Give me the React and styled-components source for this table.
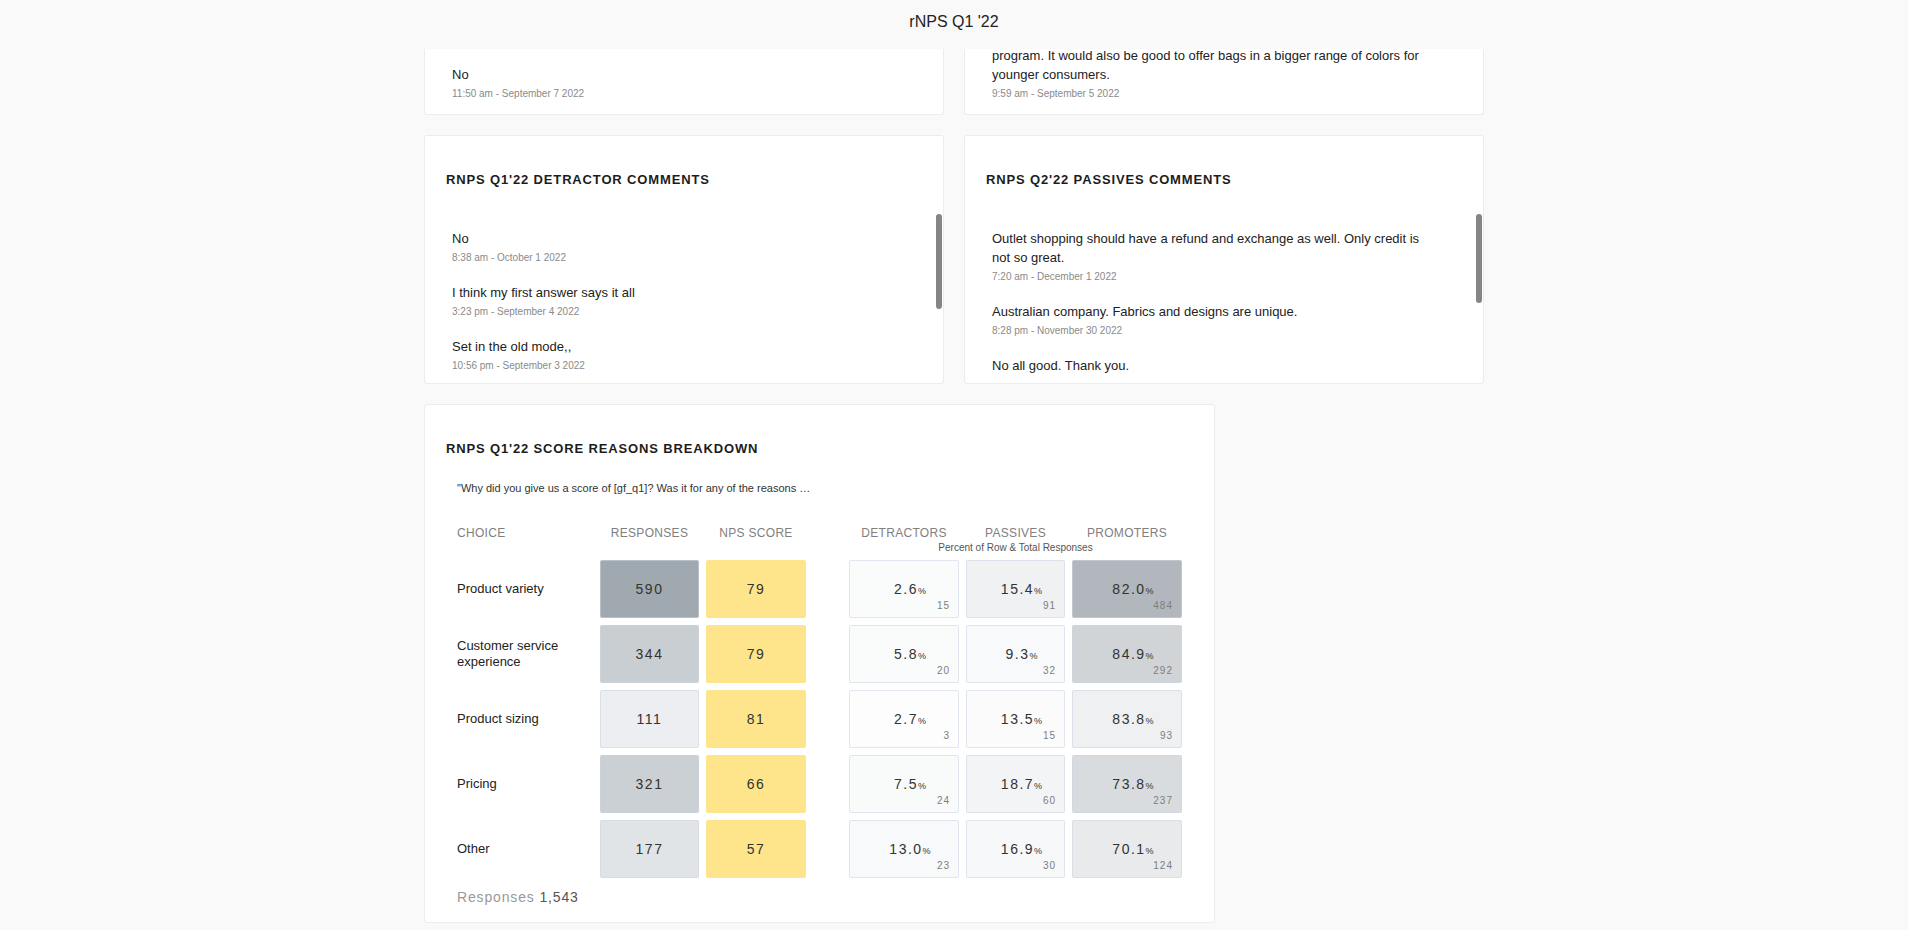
import React from "react";
import styled, { createGlobalStyle } from "styled-components";

const GlobalStyle = createGlobalStyle`
  html, body { margin: 0; padding: 0; }
  body {
    background: #f9f9f9;
    font-family: "Liberation Sans", Arial, Helvetica, sans-serif;
    color: #222;
  }
  * { box-sizing: border-box; }
`;

const Page = styled.div`
  height: 100vh;
  display: flex;
  flex-direction: column;
  overflow: hidden;
`;

const Header = styled.header`
  flex: none;
  height: 49px;
  padding-top: 13px;
  text-align: center;
  font-size: 16px;
  line-height: 18px;
  color: #222;
`;

const Viewport = styled.main`
  flex: 1;
  min-height: 0;
  overflow: hidden;
`;

const Stack = styled.div`
  width: 1060px;
  margin: 0 auto;
  display: flex;
  flex-direction: column;
  align-items: flex-start;
  gap: 20px;
`;

const Row = styled.div`
  align-self: stretch;
  display: grid;
  grid-template-columns: 1fr 1fr;
  gap: 20px;
`;

const Card = styled.section`
  background: #fff;
  border: 1px solid #ececec;
  border-radius: 3px;
`;

const TopCard = styled(Card)`
  border-top: none;
  border-radius: 0 0 3px 3px;
  padding: ${(p) => p.$padTop}px 44px 13px 27px;
`;

const ShiftedList = styled.div`
  margin-top: ${(p) => p.$shift}px;
`;

const CommentCard = styled(Card)`
  height: 249px;
  display: flex;
  flex-direction: column;
  padding: 36px 0 5px;
  overflow: hidden;
`;

const CardTitle = styled.h2`
  margin: 0;
  padding: 0 21px;
  font-size: 13px;
  line-height: 16px;
  font-weight: 700;
  letter-spacing: 0.85px;
  text-transform: uppercase;
  color: #1d1d1d;
`;

const CommentList = styled.div`
  position: relative;
  flex: 1;
  min-height: 0;
  overflow: hidden;
  margin-top: 24px;
  padding: 17px 44px 0 27px;
`;

const Comment = styled.div`
  margin-bottom: 18px;
`;

const CommentText = styled.div`
  font-size: 13px;
  line-height: 19px;
  color: #222;
`;

const CommentDate = styled.div`
  margin-top: 2px;
  font-size: 10px;
  line-height: 15px;
  color: #8a8a8a;
`;

const Thumb = styled.div`
  position: absolute;
  top: 2px;
  right: 1px;
  width: 6px;
  height: ${(p) => p.$h}px;
  border-radius: 3px;
  background: #858585;
`;

const ScoreCard = styled(Card)`
  width: 791px;
  padding: 36px 0 17px;
`;

const Quote = styled.p`
  margin: 24px 0 0;
  padding-left: 32px;
  font-size: 11px;
  line-height: 15px;
  color: #333;
`;

const Table = styled.div`
  margin-top: 30px;
  padding-left: 32px;
`;

const columns = `136px 99px 100px 146px 99px 110px`;

const HeadGrid = styled.div`
  display: grid;
  grid-template-columns: ${columns};
  column-gap: 7px;
  row-gap: 2px;
  margin-bottom: 6px;
`;

const Heading = styled.div`
  grid-row: 1;
  margin-left: ${(p) => (p.$lead ? 36 : 0)}px;
  font-size: 12px;
  line-height: 14px;
  letter-spacing: 0.3px;
  color: #808080;
  text-align: ${(p) => (p.$left ? "left" : "center")};
  white-space: nowrap;
`;

const SubHeading = styled.div`
  grid-row: 2;
  grid-column: 4 / span 3;
  margin-left: 36px;
  font-size: 10px;
  line-height: 12px;
  color: #555;
  text-align: center;
`;

const BodyGrid = styled.div`
  display: grid;
  grid-template-columns: ${columns};
  grid-auto-rows: 58px;
  column-gap: 7px;
  row-gap: 7px;
`;

const Label = styled.div`
  display: flex;
  align-items: center;
  font-size: 13px;
  line-height: 16px;
  color: #222;
`;

const Cell = styled.div`
  position: relative;
  margin-left: ${(p) => (p.$lead ? 36 : 0)}px;
  display: flex;
  align-items: center;
  justify-content: center;
  background: ${(p) => p.$bg};
  border: 1px solid ${(p) => p.$border || "rgba(203, 214, 228, 0.55)"};
  border-radius: 2px;
`;

const Number = styled.span`
  font-size: 14px;
  letter-spacing: 1.5px;
  color: #333;
`;

const Percent = styled.span`
  margin-left: 12px;
  font-size: 14px;
  letter-spacing: 1.5px;
  color: #333;
  white-space: nowrap;
`;

const PercentSign = styled.span`
  font-size: 9px;
  letter-spacing: 0;
`;

const Count = styled.span`
  position: absolute;
  right: 8px;
  bottom: 5px;
  font-size: 10px;
  line-height: 12px;
  letter-spacing: 1px;
  color: #7e7e7e;
`;

const Footer = styled.div`
  margin-top: 11px;
  padding-left: 32px;
  font-size: 14px;
  line-height: 16px;
  letter-spacing: 0.85px;
  color: #999;
`;

const FooterValue = styled.span`
  color: #555;
`;

const detractors = [
  { text: "No", date: "8:38 am - October 1 2022" },
  { text: "I think my first answer says it all", date: "3:23 pm - September 4 2022" },
  { text: "Set in the old mode,,", date: "10:56 pm - September 3 2022" },
];

const passives = [
  {
    text: "Outlet shopping should have a refund and exchange as well. Only credit is not so great.",
    date: "7:20 am - December 1 2022",
  },
  { text: "Australian company. Fabrics and designs are unique.", date: "8:28 pm - November 30 2022" },
  { text: "No all good. Thank you." },
];

const rows = [
  {
    label: "Product variety", resp: 590, respBg: "#9fa9af", nps: 79,
    det: ["2.6", 15, "#fafbfb"], pas: ["15.4", 91, "#eff1f3"], pro: ["82.0", 484, "#b1b7bc"],
  },
  {
    label: "Customer service experience", resp: 344, respBg: "#c9ced3", nps: 79,
    det: ["5.8", 20, "#fafbfb"], pas: ["9.3", 32, "#f8f9fa"], pro: ["84.9", 292, "#d0d4d7"],
  },
  {
    label: "Product sizing", resp: 111, respBg: "#eceef1", nps: 81,
    det: ["2.7", 3, "#fdfdfd"], pas: ["13.5", 15, "#fbfbfc"], pro: ["83.8", 93, "#eef0f2"],
  },
  {
    label: "Pricing", resp: 321, respBg: "#cbd0d5", nps: 66,
    det: ["7.5", 24, "#f9fafa"], pas: ["18.7", 60, "#f3f4f6"], pro: ["73.8", 237, "#d9dcdf"],
  },
  {
    label: "Other", resp: 177, respBg: "#e1e4e7", nps: 57,
    det: ["13.0", 23, "#f8f9fa"], pas: ["16.9", 30, "#f7f8f9"], pro: ["70.1", 124, "#e8eaec"],
  },
];

function CommentBlock({ item }) {
  return (
    <Comment>
      <CommentText>{item.text}</CommentText>
      {item.date && <CommentDate>{item.date}</CommentDate>}
    </Comment>
  );
}

function CommentsCard({ title, items, thumb }) {
  return (
    <CommentCard>
      <CardTitle>{title}</CardTitle>
      <CommentList>
        {items.map((c, i) => (
          <CommentBlock key={i} item={c} />
        ))}
        <Thumb $h={thumb} />
      </CommentList>
    </CommentCard>
  );
}

function PercentCell({ data, lead }) {
  const [pct, count, bg] = data;
  return (
    <Cell $bg={bg} $lead={lead}>
      <Percent>
        {pct}
        <PercentSign>%</PercentSign>
      </Percent>
      <Count>{count}</Count>
    </Cell>
  );
}

export default function App() {
  return (
    <>
      <GlobalStyle />
      <Page>
        <Header>rNPS Q1 '22</Header>
        <Viewport>
          <Stack>
            <Row>
              <TopCard $padTop={16}>
                <CommentText>No</CommentText>
                <CommentDate>11:50 am - September 7 2022</CommentDate>
              </TopCard>
              <TopCard $padTop={0}>
                <ShiftedList $shift={-3}>
                  <CommentText>
                    program. It would also be good to offer bags in a bigger range of colors for younger consumers.
                  </CommentText>
                  <CommentDate>9:59 am - September 5 2022</CommentDate>
                </ShiftedList>
              </TopCard>
            </Row>
            <Row>
              <CommentsCard title="rNPS Q1'22 Detractor Comments" items={detractors} thumb={95} />
              <CommentsCard title="rNPS Q2'22 Passives Comments" items={passives} thumb={89} />
            </Row>
            <ScoreCard>
              <CardTitle>rNPS Q1'22 Score Reasons Breakdown</CardTitle>
              <Quote>"Why did you give us a score of [gf_q1]? Was it for any of the reasons …</Quote>
              <Table>
                <HeadGrid>
                  <Heading $left>CHOICE</Heading>
                  <Heading>RESPONSES</Heading>
                  <Heading>NPS SCORE</Heading>
                  <Heading $lead>DETRACTORS</Heading>
                  <Heading>PASSIVES</Heading>
                  <Heading>PROMOTERS</Heading>
                  <SubHeading>Percent of Row &amp; Total Responses</SubHeading>
                </HeadGrid>
                <BodyGrid>
                  {rows.map((r) => (
                    <React.Fragment key={r.label}>
                      <Label>{r.label}</Label>
                      <Cell $bg={r.respBg}>
                        <Number>{r.resp}</Number>
                      </Cell>
                      <Cell $bg="#fee58b" $border="#fee58b">
                        <Number>{r.nps}</Number>
                      </Cell>
                      <PercentCell data={r.det} lead />
                      <PercentCell data={r.pas} />
                      <PercentCell data={r.pro} />
                    </React.Fragment>
                  ))}
                </BodyGrid>
              </Table>
              <Footer>
                Responses <FooterValue>1,543</FooterValue>
              </Footer>
            </ScoreCard>
          </Stack>
        </Viewport>
      </Page>
    </>
  );
}
